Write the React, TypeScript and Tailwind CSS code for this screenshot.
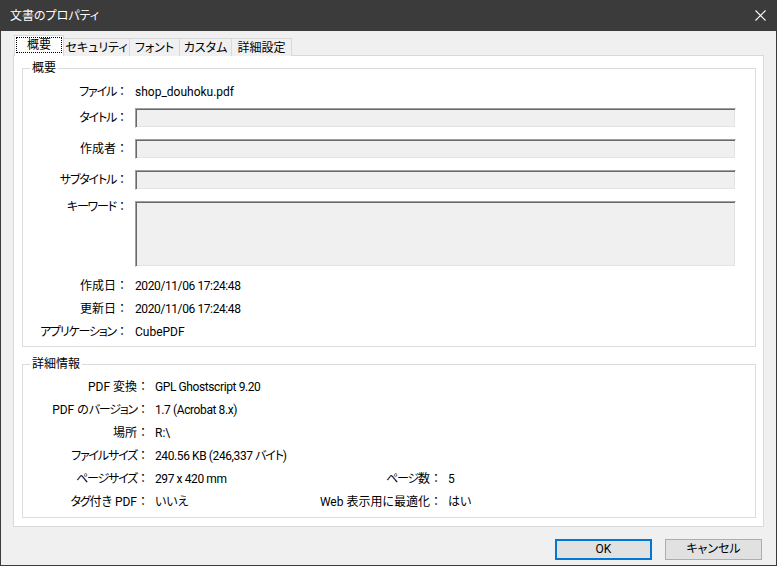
import React from 'react';

const font = "font-['Roboto','Noto_Sans_CJK_JP',sans-serif] [font-feature-settings:'palt']";

const tabs = ['概要', 'セキュリティ', 'フォント', 'カスタム', '詳細設定'];
const tabWidths = ['w-[50px]', 'w-[66px]', 'w-[50px]', 'w-[52px]', 'w-[60px]'];

// Katakana runs are set a little tighter, closer to the UI font of the original
function Txt({ text }: { text: string }) {
  const parts = text.split(/([\u30A0-\u30FF]+)/);
  return (
    <>
      {parts.map((p, i) =>
        /[\u30A0-\u30FF]/.test(p) ? (
          <span key={i} className="tracking-[-1.2px]">{p}</span>
        ) : (
          <span key={i} className={/\d/.test(p) ? 'tracking-[-0.4px]' : ''}>{p}</span>
        )
      )}
    </>
  );
}

function Label({ text, width }: { text: string; width: string }) {
  return (
    <div className="flex shrink-0 whitespace-nowrap">
      <span className={`${width} text-right`}><Txt text={text} /></span>
      <span className="w-[12px] text-center [font-feature-settings:normal]">：</span>
    </div>
  );
}

function Field({ tall }: { tall?: boolean }) {
  return (
    <div
      className={`flex-1 ${tall ? 'h-[66px]' : 'h-[20px]'} bg-[#f0f0f0] border border-t-[#a0a0a0] border-l-[#a0a0a0] border-r-white border-b-white shadow-[inset_1px_1px_0_#696969,inset_-1px_-1px_0_#e3e3e3]`}
    />
  );
}

function InputRow({ label, tall }: { label: string; tall?: boolean }) {
  return (
    <div className="flex items-start">
      <div className={`leading-[20px] ${tall ? '-mt-[4px]' : ''}`}>
        <Label text={label} width="w-[93px]" />
      </div>
      <div className="ml-[7px] flex-1 flex">
        <Field tall={tall} />
      </div>
    </div>
  );
}

function TextRow({ label, value }: { label: string; value: string }) {
  return (
    <div className="flex leading-[20px]">
      <Label text={label} width="w-[93px]" />
      <div className="ml-[7px]"><Txt text={value} /></div>
    </div>
  );
}

function DetailRow({ label, value, label2, value2 }: { label: string; value: string; label2?: string; value2?: string }) {
  return (
    <div className="flex leading-[20px] whitespace-nowrap">
      <Label text={label} width="w-[114px]" />
      <div className="ml-[6px] w-[140px]"><Txt text={value} /></div>
      {label2 && (
        <>
          <Label text={label2} width="w-[135px]" />
          <div className="ml-[6px]"><Txt text={value2 ?? ''} /></div>
        </>
      )}
    </div>
  );
}

export default function App() {
  return (
    <div className={`w-[777px] h-[566px] bg-[#f0f0f0] text-[12px] text-black flex flex-col border-x border-b border-[#3b3b3b] ${font}`}>
      {/* Title bar */}
      <div className="h-[31px] -mx-px bg-[#3b3b3b] text-white flex items-center justify-between pl-[10px] pr-[11px] shrink-0">
        <span className="leading-[20px]">文書のプロパティ</span>
        <svg width="11" height="11" viewBox="0 0 11 11" className="mt-[-1px]">
          <path d="M0.5 0.5 L10.5 10.5 M10.5 0.5 L0.5 10.5" stroke="white" strokeWidth="1.1" />
        </svg>
      </div>

      <div className="px-[12px] flex flex-col flex-1">
        {/* Tabs */}
        <div className="flex items-end h-[25px] pl-px relative z-10 -mb-px">
          {tabs.map((t, i) =>
            i === 0 ? (
              <div key={t} className={`${tabWidths[i]} h-[21px] bg-white border border-b-0 border-[#d9d9d9] flex items-start justify-center pt-[1px]`}>
                <span className="border border-dotted border-black px-[3px] leading-[14px] h-[16px] w-[46px] text-center">{t}</span>
              </div>
            ) : (
              <div key={t} className={`${tabWidths[i]} h-[18px] bg-[#f0f0f0] border border-b-0 border-l-0 border-[#d9d9d9] flex items-center justify-center leading-[16px]`}>
                {t}
              </div>
            )
          )}
        </div>

        {/* Panel */}
        <div className="h-[472px] bg-white border border-[#d9d9d9] pl-[8px] pr-[7px] pt-[5px] flex flex-col">
          <fieldset className="border border-[#dcdcdc] px-0 pt-[7px] pb-[5px] h-[286px]">
            <legend className="ml-[7px] px-[2px] leading-[14px]">概要</legend>
            <div className="flex flex-col pr-[19px]">
              <TextRow label="ファイル" value="shop_douhoku.pdf" />
              <div className="mt-[6px] flex flex-col gap-[11px]">
                <InputRow label="タイトル" />
                <InputRow label="作成者" />
                <InputRow label="サブタイトル" />
                <InputRow label="キーワード" tall />
              </div>
              <div className="mt-[9px] flex flex-col gap-[3px]">
                <TextRow label="作成日" value="2020/11/06 17:24:48" />
                <TextRow label="更新日" value="2020/11/06 17:24:48" />
                <TextRow label="アプリケーション" value="CubePDF" />
              </div>
            </div>
          </fieldset>

          <fieldset className="mt-[10px] border border-[#dcdcdc] px-0 pt-[6px] pb-[4px] h-[161px]">
            <legend className="ml-[7px] px-[2px] leading-[14px]">詳細情報</legend>
            <div className="flex flex-col gap-[3px]">
              <DetailRow label="PDF 変換" value="GPL Ghostscript 9.20" />
              <DetailRow label="PDF のバージョン" value="1.7 (Acrobat 8.x)" />
              <DetailRow label="場所" value="R:\" />
              <DetailRow label="ファイルサイズ" value="240.56 KB (246,337 バイト)" />
              <DetailRow label="ページサイズ" value="297 x 420 mm" label2="ページ数" value2="5" />
              <DetailRow label="タグ付き PDF" value="いいえ" label2="Web 表示用に最適化" value2="はい" />
            </div>
          </fieldset>
        </div>

        {/* Buttons */}
        <div className="flex justify-end gap-[13px] mt-[12px] pr-[2px]">
          <button className="w-[97px] h-[21px] bg-[#e1e1e1] border-2 border-[#0078d7] leading-[17px]">OK</button>
          <button className="w-[97px] h-[21px] bg-[#e1e1e1] border border-[#adadad] leading-[19px]">キャンセル</button>
        </div>
      </div>
    </div>
  );
}
